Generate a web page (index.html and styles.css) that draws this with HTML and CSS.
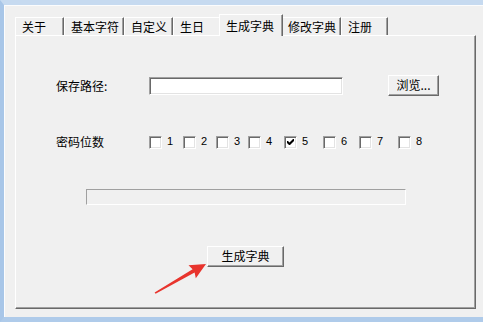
FILE: index.html
```html
<!DOCTYPE html>
<html>
<head>
<meta charset="utf-8">
<link rel="stylesheet" href="styles.css">
</head>
<body>
<div class="window">
  <div class="tabs">
    <div class="tab w49">关于</div>
    <div class="tab w60">基本字符</div>
    <div class="tab w49">自定义</div>
    <div class="tab w48">生日</div>
    <div class="tab active">生成字典</div>
    <div class="tab w60">修改字典</div>
    <div class="tab w47">注册</div>
  </div>
  <div class="panel">
    <div class="row path-row">
      <span class="label">保存路径:</span>
      <div class="field"></div>
      <div class="btn browse">浏览...</div>
    </div>
    <div class="row digits-row">
      <span class="label">密码位数</span>
      <div class="checks">
        <div class="check"><span class="box"></span><span class="num">1</span></div>
        <div class="check"><span class="box"></span><span class="num">2</span></div>
        <div class="check"><span class="box"></span><span class="num">3</span></div>
        <div class="check"><span class="box"></span><span class="num">4</span></div>
        <div class="check"><span class="box"><svg class="tick" width="7" height="7" viewBox="0 0 7 7"><path d="M0 2 L0 4 L2 6 L3 6 L7 2 L7 0 L6 0 L2.5 3.5 L1 2 Z" fill="#000"/></svg></span><span class="num">5</span></div>
        <div class="check"><span class="box"></span><span class="num">6</span></div>
        <div class="check"><span class="box"></span><span class="num">7</span></div>
        <div class="check"><span class="box"></span><span class="num">8</span></div>
      </div>
    </div>
    <div class="progress"></div>
    <div class="btn generate">生成字典</div>
  </div>
</div>
<svg class="arrow" width="483" height="322" viewBox="0 0 483 322">
  <polygon points="206,264 188.5,265.3 192.6,269.2 154.6,292.4 155.6,293.8 194.6,272.6 195.8,278.2" fill="#e8342d"/>
</svg>
</body>
</html>
```

FILE: styles.css
```css
html, body {
  margin: 0;
  padding: 0;
}
body {
  position: relative;
  width: 483px;
  height: 322px;
  overflow: hidden;
  background: #f0f0f0;
  font-family: "Noto Sans CJK SC", "Liberation Sans", sans-serif;
  font-size: 12px;
  color: #000;
}
.window {
  box-sizing: border-box;
  width: 483px;
  height: 322px;
  border-top: 5px solid #c6daf0;
  border-left: 4px solid #a8c6e8;
  border-bottom: 5px solid #afcbea;
  padding: 9px 7px 8px 11px;
  background: #f0f0f0;
  box-shadow: inset 1px 1px 0 #fbfcfd;
  display: flex;
  flex-direction: column;
}
.tabs {
  display: flex;
  align-items: flex-end;
  height: 21px;
  position: relative;
  z-index: 2;
}
.tab {
  box-sizing: border-box;
  height: 18px;
  padding: 1px 0 0 6px;
  line-height: 16px;
  border-top: 1px solid #ffffff;
  border-left: 1px solid #ffffff;
  border-right: 1px solid #696969;
  box-shadow: inset -1px 0 0 #a0a0a0;
  background: #f0f0f0;
  white-space: nowrap;
}
.w47 { width: 47px; }
.w48 { width: 48px; }
.w49 { width: 49px; }
.w60 { width: 60px; }
.tab.active {
  width: 64px;
  height: 22px;
  margin: 0 -2px -1px -2px;
  padding-top: 3px;
  position: relative;
  z-index: 3;
}
.panel {
  box-sizing: border-box;
  height: 274px;
  border-top: 1px solid #ffffff;
  border-left: 1px solid #ffffff;
  border-right: 1px solid #696969;
  border-bottom: 1px solid #696969;
  box-shadow: inset -1px -1px 0 #a0a0a0;
  padding-left: 40px;
  display: flex;
  flex-direction: column;
  align-items: flex-start;
}
.row {
  display: flex;
  align-items: center;
  height: 21px;
}
.path-row {
  margin-top: 39px;
}
.digits-row {
  margin-top: 35px;
}
.label {
  width: 93px;
  line-height: 14px;
  white-space: nowrap;
}
.field {
  box-sizing: border-box;
  width: 194px;
  height: 18px;
  background: #ffffff;
  border-top: 1px solid #a0a0a0;
  border-left: 1px solid #a0a0a0;
  border-bottom: 1px solid #ffffff;
  border-right: 1px solid #ffffff;
  box-shadow: inset 1px 1px 0 #696969, inset -1px -1px 0 #e3e3e3;
}
.btn {
  box-sizing: border-box;
  height: 21px;
  background: #f0f0f0;
  border-top: 1px solid #ffffff;
  border-left: 1px solid #ffffff;
  border-right: 1px solid #696969;
  border-bottom: 1px solid #696969;
  box-shadow: inset -1px -1px 0 #a0a0a0;
  text-align: center;
  line-height: 18px;
  white-space: nowrap;
}
.browse {
  width: 51px;
  margin-left: 45px;
}
.checks {
  display: grid;
  grid-template-columns: 34px 33px 32px 36px 39px 36px 39px auto;
  align-items: center;
}
.check {
  display: flex;
  align-items: center;
}
.box {
  box-sizing: border-box;
  width: 13px;
  height: 13px;
  margin-top: 2px;
  background: #ffffff;
  border-top: 1px solid #a0a0a0;
  border-left: 1px solid #a0a0a0;
  border-bottom: 1px solid #ffffff;
  border-right: 1px solid #ffffff;
  box-shadow: inset 1px 1px 0 #696969, inset -1px -1px 0 #e3e3e3;
  display: flex;
  align-items: center;
  justify-content: center;
}
.tick {
  display: block;
}
.num {
  margin-left: 5px;
  font-family: "Liberation Sans", sans-serif;
  font-size: 11px;
  line-height: 13px;
}
.progress {
  box-sizing: border-box;
  width: 320px;
  height: 16px;
  margin-top: 37px;
  margin-left: 30px;
  border-top: 1px solid #a0a0a0;
  border-left: 1px solid #a0a0a0;
  border-bottom: 1px solid #ffffff;
  border-right: 1px solid #ffffff;
}
.generate {
  width: 77px;
  margin-top: 41px;
  margin-left: 151px;
}
.arrow {
  position: absolute;
  top: 0;
  left: 0;
  pointer-events: none;
}
```
